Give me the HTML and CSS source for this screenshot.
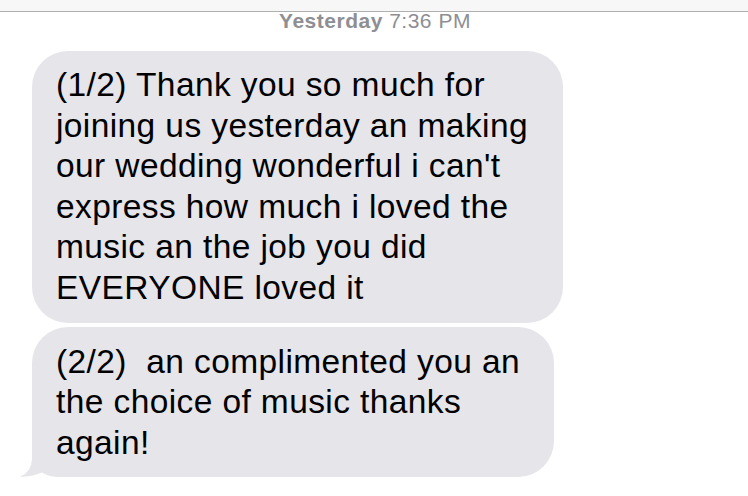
FILE: index.html
```html
<!DOCTYPE html>
<html>
<head>
<meta charset="utf-8">
<link rel="stylesheet" href="styles.css">
</head>
<body>
<div class="topbar"></div>
<div class="stamp"><span class="day">Yesterday</span> 7:36 PM</div>
<div class="thread">
  <div class="bubble bubble-one"><span class="msg">(1/2) Thank you so much for<br>joining us yesterday an making<br>our wedding wonderful i can't<br>express how much i loved the<br>music an the job you did<br>EVERYONE loved it</span></div>
  <div class="bubble bubble-two"><svg class="tail" width="48" height="40" viewBox="0 0 48 40"><path d="M12 0 L12 22 Q11.5 35 0 40 Q12 39.5 22 35.5 Q29 40 40 40 L48 40 L48 0 Z" fill="#e5e5ea"/></svg><span class="msg">(2/2)&nbsp; an complimented you an<br>the choice of music thanks<br>again!</span></div>
</div>
</body>
</html>
```
FILE: styles.css
```css
html, body {
  margin: 0;
  padding: 0;
  background: #ffffff;
  font-family: "Liberation Sans", Arial, sans-serif;
  width: 748px;
  height: 496px;
  overflow: hidden;
}
.topbar {
  height: 11px;
  background: #f7f7f7;
  border-bottom: 1px solid #b0b0b0;
}
.stamp {
  text-align: center;
  font-size: 21px;
  line-height: 18px;
  letter-spacing: 0.5px;
  color: #8e8e93;
  padding-left: 2px;
}
.day {
  font-weight: bold;
}
.thread {
  display: flex;
  flex-direction: column;
  gap: 4px;
  padding: 21px 0 0 32px;
}
.bubble {
  position: relative;
  box-sizing: border-box;
  background: #e5e5ea;
  color: #000;
  font-size: 33.5px;
  letter-spacing: 0.4px;
  line-height: 40.6px;
  padding: 14px 24px 14px 24px;
  border-radius: 36px;
  white-space: nowrap;
}
.msg {
  position: relative;
  z-index: 1;
}
.bubble-one {
  width: 531px;
}
.bubble-two {
  width: 522px;
  padding-top: 15px;
  padding-bottom: 14px;
}
.tail {
  position: absolute;
  left: -12px;
  bottom: 0;
  display: block;
  z-index: 0;
}
```
